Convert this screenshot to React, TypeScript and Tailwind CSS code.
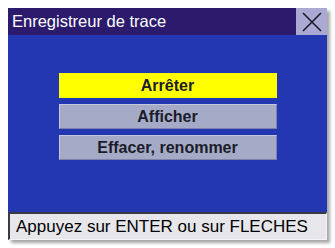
export default function App() {
  const items = [
    { label: "Arrêter", active: true },
    { label: "Afficher", active: false },
    { label: "Effacer, renommer", active: false },
  ];
  return (
    <div
      className="w-[335px] h-[248px] bg-white p-2"
      style={{ fontFamily: '"Liberation Sans", Arial, sans-serif' }}
    >
      <div className="w-[319px] h-[232px] flex flex-col shadow-[3px_3px_3px_rgba(0,0,0,0.35)]">
        <div className="h-[27px] bg-[#2c1a6c] flex items-stretch">
          <div className="flex-1 flex items-center pl-[4px] text-[16.5px] text-white leading-none">
            Enregistreur de trace
          </div>
          <div className="w-[31px] bg-[#a9a9d3] flex items-center justify-center">
            <svg width="22" height="22" viewBox="0 0 22 22">
              <path d="M2 2 L20 20 M20 2 L2 20" stroke="#1c1c28" strokeWidth="1.6" fill="none" />
            </svg>
          </div>
        </div>
        <div className="flex-1 bg-[#2337b3] pt-[38px] flex flex-col items-center gap-[6px]">
          {items.map((it) => (
            <div
              key={it.label}
              className={`w-[218px] h-[25px] flex items-center justify-center text-[16px] font-bold text-[#1b1b2b] border ${
                it.active
                  ? "bg-[#ffff00] border-[#ffff00]"
                  : "bg-[#a5abc6] border-t-[#c4c8dc] border-l-[#c4c8dc] border-b-[#7c82a8] border-r-[#7c82a8]"
              }`}
            >
              {it.label}
            </div>
          ))}
        </div>
        <div className="h-[28px] bg-[#e7e7eb] border-t-2 border-l-2 border-t-[#3a3a44] border-l-[#3a3a44] border-r border-b border-r-[#f4f4f6] border-b-[#f4f4f6] flex items-center pl-[6px] text-[17px] text-black leading-none">
          Appuyez sur ENTER ou sur FLECHES
        </div>
      </div>
    </div>
  );
}
